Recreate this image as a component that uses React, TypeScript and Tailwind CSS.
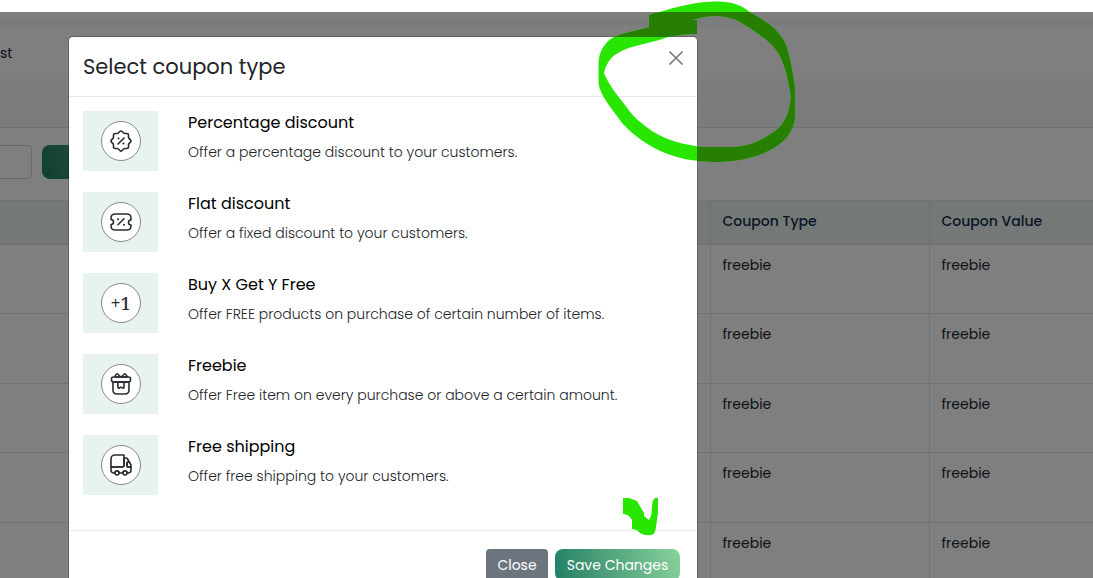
import type { ReactNode } from "react";

interface CouponType {
  title: string;
  description: string;
  icon: ReactNode;
}

function Icon({ children }: { children: ReactNode }) {
  return (
    <svg
      viewBox="0 0 24 24"
      className="h-6 w-6"
      fill="none"
      stroke="currentColor"
      strokeWidth="1.6"
      strokeLinecap="round"
      strokeLinejoin="round"
      aria-hidden="true"
    >
      {children}
    </svg>
  );
}

const couponTypes: CouponType[] = [
  {
    title: "Percentage discount",
    description: "Offer a percentage discount to your customers.",
    icon: (
      <Icon>
        <path d="M3.99 14.66 2.47 13.14C1.85 12.52 1.85 11.5 2.47 10.88L3.99 9.36C4.25 9.1 4.46 8.59 4.46 8.23V6.08C4.46 5.2 5.18 4.48 6.06 4.48H8.21C8.57 4.48 9.08 4.27 9.34 4.01L10.86 2.49C11.48 1.87 12.5 1.87 13.12 2.49L14.64 4.01C14.9 4.27 15.41 4.48 15.77 4.48H17.92C18.8 4.48 19.52 5.2 19.52 6.08V8.23C19.52 8.59 19.73 9.1 19.99 9.36L21.51 10.88C22.13 11.5 22.13 12.52 21.51 13.14L19.99 14.66C19.73 14.92 19.52 15.43 19.52 15.79V17.94C19.52 18.82 18.8 19.54 17.92 19.54H15.77C15.41 19.54 14.9 19.75 14.64 20.01L13.12 21.53C12.5 22.15 11.48 22.15 10.86 21.53L9.34 20.01C9.08 19.75 8.57 19.54 8.21 19.54H6.06C5.18 19.54 4.46 18.82 4.46 17.94V15.79C4.46 15.42 4.25 14.91 3.99 14.66Z" />
        <path d="M9 15 15 9" />
        <path d="M14.49 14.5h.01M9.49 9.5h.01" strokeWidth="2" />
      </Icon>
    ),
  },
  {
    title: "Flat discount",
    description: "Offer a fixed discount to your customers.",
    icon: (
      <Icon>
        <path d="M19.5 12.5C19.5 11.12 20.62 10 22 10V9C22 5 21 4 17 4H7C3 4 2 5 2 9V9.5C3.38 9.5 4.5 10.62 4.5 12C4.5 13.38 3.38 14.5 2 14.5V15C2 19 3 20 7 20H17C21 20 22 19 22 15C20.62 15 19.5 13.88 19.5 12.5Z" />
        <path d="M9 14.75 15 8.75" />
        <path d="M14.99 14.75H15M8.99 9.25H9" strokeWidth="2" />
      </Icon>
    ),
  },
  {
    title: "Buy X Get Y Free",
    description: "Offer FREE products on purchase of certain number of items.",
    icon: <span className="font-['Noto_Serif','Liberation_Serif',serif] text-lg font-medium">+1</span>,
  },
  {
    title: "Freebie",
    description: "Offer Free item on every purchase or above a certain amount.",
    icon: (
      <Icon>
        <path d="M19.97 10H3.97V18C3.97 21 4.97 22 7.97 22H15.97C18.97 22 19.97 21 19.97 18V10Z" />
        <path d="M21.5 7V8C21.5 9.1 20.97 10 19.5 10H4.5C2.97 10 2.5 9.1 2.5 8V7C2.5 5.9 2.97 5 4.5 5H19.5C20.97 5 21.5 5.9 21.5 7Z" />
        <path d="M11.64 5H6.12C5.78 4.63 5.79 4.06 6.15 3.7L7.57 2.28C7.94 1.91 8.55 1.91 8.92 2.28L11.64 5Z" />
        <path d="M17.87 5H12.35L15.07 2.28C15.44 1.91 16.05 1.91 16.42 2.28L17.84 3.7C18.2 4.06 18.21 4.63 17.87 5Z" />
        <path d="M8.94 10V15.14C8.94 15.94 9.82 16.41 10.49 15.98L11.43 15.36C11.77 15.14 12.2 15.14 12.53 15.36L13.42 15.96C14.08 16.4 14.97 15.93 14.97 15.13V10H8.94Z" />
      </Icon>
    ),
  },
  {
    title: "Free shipping",
    description: "Offer free shipping to your customers.",
    icon: (
      <Icon>
        <path d="M15 2V12C15 13.1 14.1 14 13 14H2V6C2 3.79 3.79 2 6 2H15Z" />
        <path d="M22 14V17C22 18.66 20.66 20 19 20H18C18 18.9 17.1 18 16 18S14 18.9 14 20H10C10 18.9 9.1 18 8 18S6 18.9 6 20H5C3.34 20 2 18.66 2 17V14H13C14.1 14 15 13.1 15 12V5H16.84C17.56 5 18.22 5.39 18.58 6.01L20.29 9H19C18.45 9 18 9.45 18 10V13C18 13.55 18.45 14 19 14H22Z" />
        <circle cx="8" cy="20" r="2" />
        <circle cx="16" cy="20" r="2" />
        <path d="M22 12V14H19C18.45 14 18 13.55 18 13V10C18 9.45 18.45 9 19 9H20.29L22 12Z" />
      </Icon>
    ),
  },
];

const coupons = ["freebie", "freebie", "freebie", "freebie", "freebie"];

function CouponPage() {
  return (
    <div className="flex-1 bg-white pt-1.5">
      <div className="h-[9px] bg-[#f4faf7]" />
      <div className="flex h-[52px] items-center text-sm text-[#14213d]">st</div>
      <div className="h-[49px] border-b border-[#dee2e6] bg-[#f4faf7]" />
      <div className="flex items-center gap-2.5 pt-[17px] pb-[21px]">
        <input
          aria-label="Search coupons"
          className="h-[34px] w-8 rounded-r-sm border border-l-0 border-[#ced4da] bg-white"
        />
        <button
          type="button"
          aria-label="Create coupon"
          className="h-[34px] w-40 rounded-lg bg-linear-75 from-[#1d8065] to-[#88d19b]"
        />
      </div>
      <table className="w-full table-fixed border-collapse text-left text-sm text-[#212529]">
        <colgroup>
          <col className="w-[710px]" />
          <col className="w-[219px]" />
          <col />
        </colgroup>
        <thead>
          <tr className="h-[43px] border-t border-b-2 border-[#dee2e6] bg-[#e8f3ef] text-[#0f2b4a]">
            <td />
            <th className="border-l border-[#dee2e6] px-3 pb-0.5 font-medium">Coupon Type</th>
            <th className="border-l border-[#dee2e6] px-3 pb-0.5 font-medium">Coupon Value</th>
          </tr>
        </thead>
        <tbody>
          {coupons.map((coupon, i) => (
            <tr key={i} className="h-[69px] border-b border-[#dee2e6] align-top first:h-[70px] even:h-[70px]">
              <td />
              <td className="border-l border-[#dee2e6] px-3 py-2.5">{coupon}</td>
              <td className="border-l border-[#dee2e6] px-3 py-2.5">{coupon}</td>
            </tr>
          ))}
        </tbody>
      </table>
    </div>
  );
}

function CouponTypeRow({ type }: { type: CouponType }) {
  return (
    <li className="flex gap-[30px]">
      <div className="flex h-[60px] w-[75px] shrink-0 items-center justify-center bg-[#e8f3ef]">
        <div className="flex h-10 w-10 items-center justify-center rounded-full border border-[#888888] bg-white text-[#292d32]">
          {type.icon}
        </div>
      </div>
      <div className="min-w-0">
        <h6 className="text-base leading-6 text-black">{type.title}</h6>
        <p className="mt-[5px] text-sm leading-6 font-light text-[#212529]">{type.description}</p>
      </div>
    </li>
  );
}

function CouponModal() {
  return (
    <div
      role="dialog"
      aria-labelledby="coupon-modal-title"
      className="w-full max-w-[630px] rounded-[5px] border border-black/20 bg-white bg-clip-padding"
    >
      <div className="flex h-[60px] items-center justify-between border-b border-[#e4e7ec] px-3.5">
        <h5 id="coupon-modal-title" className="text-[21px] text-[#212529]">
          Select coupon type
        </h5>
        <button type="button" aria-label="Close" className="mb-[18px] text-[#808080]">
          <svg viewBox="0 0 14 14" className="h-3.5 w-3.5" fill="none" stroke="currentColor" strokeWidth="1.6">
            <path d="M0.5 0.5 13.5 13.5M13.5 0.5 0.5 13.5" />
          </svg>
        </button>
      </div>
      <ul className="flex flex-col gap-[21px] px-3.5 pt-3.5 pb-[35px]">
        {couponTypes.map((type) => (
          <CouponTypeRow key={type.title} type={type} />
        ))}
      </ul>
      <div className="flex justify-end gap-[7px] border-t border-[#e9ecef] px-[17px] py-[18px] text-sm text-white">
        <button type="button" className="h-8 w-[62px] rounded-sm bg-[#6c757d]">
          Close
        </button>
        <button type="button" className="h-8 w-[125px] rounded-lg bg-linear-75 from-[#1d8065] to-[#88d19b]">
          Save Changes
        </button>
      </div>
    </div>
  );
}

const loop =
  "M649 15C670 9 690 2 714 1.5C730 1 741 4 751 13C768 22 780 31 786 45C791 60 793 74 795 88V118C792 137 780 146 764 153C748 160 730 162 711 162C694 161 680 159 665 153C648 146 634 136 622 123C613 110 600 96 598.5 83V63C599 53 603 44 612 38C624 32 636 31 649 27Z" +
  "M697 34V20H692C712 14 726 15 740 22C757 33 772 41 780 56C786 68 789 84 791 97C789 115 784 126 772 133C760 142 746 147 730 147H703C685 145 668 141 652 131C642 124 633 117 625 105C615 93 608 83 604 73C606 65 610 57 618 53C633 44 650 44 665 38C675 35 684 34 697 34Z";

const arrow =
  "M623 498H629L637 501L641 508L644 513V516L649 520Q652 515 652 508Q652 500 655 498H658V513L656 527Q655 535 651 535H645Q640 534 637 530L632 529V520Q629 514 623 514Z";

// Marker strokes drawn on top, dimmed wherever they cross the backdrop
function Marker() {
  return (
    <svg width="800" height="578" viewBox="0 0 800 578" className="pointer-events-none absolute top-0 left-0" aria-hidden="true">
      <defs>
        <clipPath id="backdrop-area">
          <path clipRule="evenodd" d="M0 12H800V578H0ZM69 578V41Q69 37 73 37H693Q697 37 697 41V578Z" />
        </clipPath>
      </defs>
      <path d={loop} fill="#28e600" fillRule="evenodd" />
      <path d={loop} fill="#267f00" fillRule="evenodd" clipPath="url(#backdrop-area)" />
      <path d={arrow} fill="#28e600" />
    </svg>
  );
}

export default function App() {
  return (
    <div className="relative flex h-screen flex-col overflow-hidden bg-white pt-3 font-[Poppins,Inter,sans-serif]">
      <CouponPage />
      <div className="absolute inset-x-0 top-3 bottom-0 overflow-hidden bg-black/50 pt-6 pl-[68px]">
        <CouponModal />
      </div>
      <Marker />
    </div>
  );
}
